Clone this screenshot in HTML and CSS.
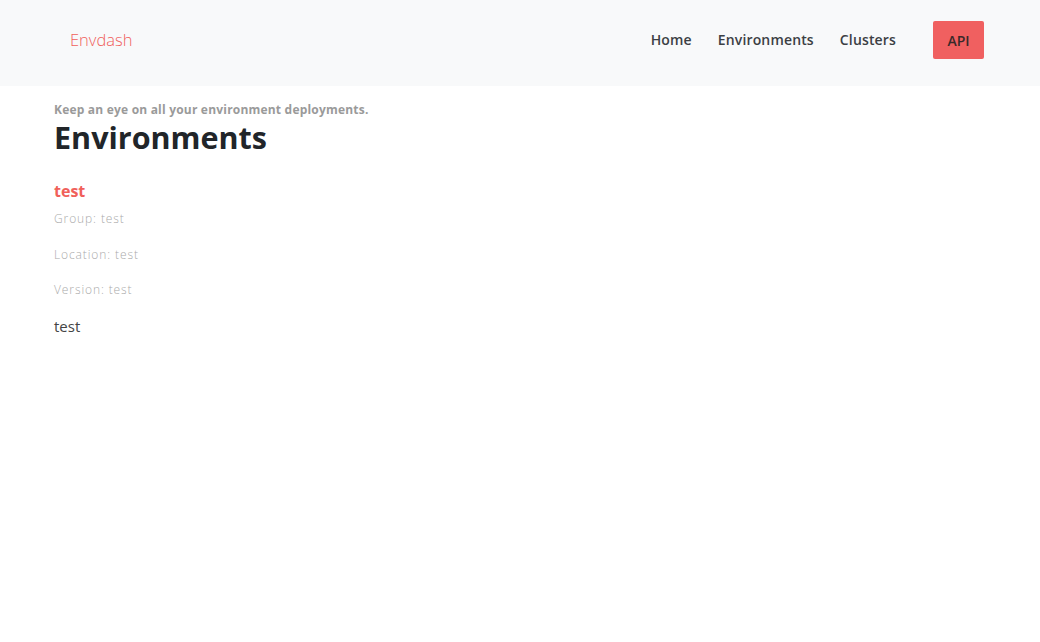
FILE: index.html
```html
<!DOCTYPE html>
<html>
<head>
<meta charset="utf-8">
<link rel="stylesheet" href="styles.css">
</head>
<body>
<header class="navbar">
  <a class="brand" href="#">Envdash</a>
  <nav class="nav">
    <a class="nav-link" href="#">Home</a>
    <a class="nav-link" href="#">Environments</a>
    <a class="nav-link" href="#">Clusters</a>
    <a class="btn-api" href="#">API</a>
  </nav>
</header>
<main class="content">
  <p class="lead">Keep an eye on all your environment deployments.</p>
  <h1 class="title">Environments</h1>
  <section class="env">
    <h2 class="env-name">test</h2>
    <p class="meta">Group: test</p>
    <p class="meta">Location: test</p>
    <p class="meta">Version: test</p>
    <p class="desc">test</p>
  </section>
</main>
</body>
</html>
```
FILE: styles.css
```css
* { box-sizing: border-box; }
body {
  margin: 0;
  font-family: "Open Sans", "Liberation Sans", sans-serif;
  background: #fff;
  color: #212529;
}
a { text-decoration: none; }
.navbar {
  height: 86px;
  background: #f8f9fa;
  display: flex;
  align-items: center;
  justify-content: space-between;
  padding: 0 56px 0 70px;
}
.brand {
  color: #f0605a;
  font-size: 16.5px;
  font-weight: 300;
  margin-top: -8px;
}
.nav {
  display: flex;
  align-items: center;
  margin-top: -7px;
}
.nav-link {
  color: #3c3f44;
  font-weight: 600;
  font-size: 14px;
  letter-spacing: 0.15px;
  margin-right: 26px;
}
.nav-link:nth-child(3) { margin-right: 37px; }
.btn-api {
  display: flex;
  align-items: center;
  justify-content: center;
  width: 51px;
  height: 38px;
  background: #f06060;
  color: #3a2a2a;
  font-weight: 600;
  font-size: 14px;
  border-radius: 2px;
  margin-top: 1px;
}
.content {
  padding: 0 54px;
}
.lead {
  margin: 17px 0 0;
  font-size: 12px;
  font-weight: 700;
  color: #9a9a9a;
  letter-spacing: 0.2px;
  line-height: 1.2;
}
.title {
  margin: 4px 0 0;
  font-size: 30.5px;
  font-weight: 700;
  color: #212529;
  line-height: 1.1;
}
.env-name {
  margin: 27px 0 0;
  font-size: 16px;
  font-weight: 700;
  color: #f0605a;
  line-height: 1.2;
}
.meta {
  margin: 11px 0 0;
  font-size: 12px;
  font-weight: 300;
  color: #aaa;
  letter-spacing: 0.9px;
  line-height: 1.2;
}
.meta + .meta { margin-top: 21px; }
.desc {
  margin: 20px 0 0;
  font-size: 15px;
  color: #444;
  line-height: 1.2;
}
```
